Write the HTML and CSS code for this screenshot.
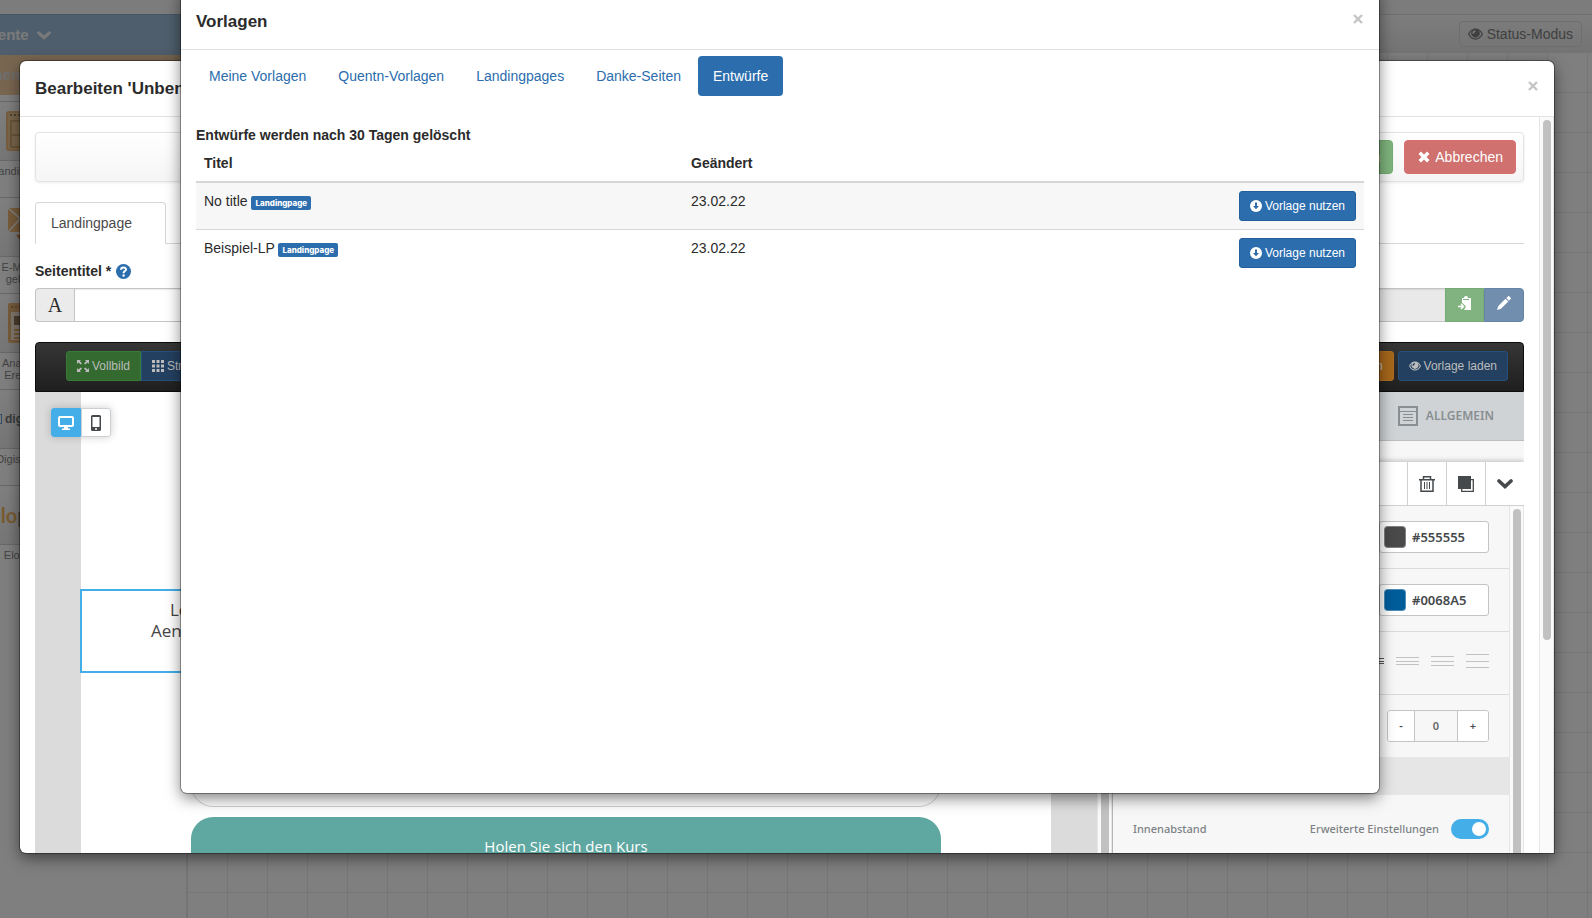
FILE: index.html
```html
<!DOCTYPE html>
<html lang="de">
<head>
    <meta charset="UTF-8">
    <meta name="viewport" content="width=device-width, initial-scale=1.0">
    <title>Vorlagen</title>
    <link rel="stylesheet" href="styles.css">
</head>
<body>
    <!-- shared icons -->
    <svg class="defs" aria-hidden="true">
        <symbol id="i-eye" viewBox="0 0 16 12"><path fill="currentColor" fill-rule="evenodd" d="M8 0C4.500 0 1.500 2.500 0 6c1.500 3.500 4.500 6 8 6s6.500-2.500 8-6C14.500 2.500 11.500 0 8 0zM1.500 6C2.300 4.300 3.300 3 4.700 2.200a4.500 4.500 0 1 0 6.600 0C12.700 3 13.700 4.300 14.500 6c-1.500 3-3.800 4.800-6.500 4.800S3 9 1.500 6zM7 2.200c1 0 1.300.6 1 1.300-.3.700-1.600.7-1.900 1.900-.2.900-1 .8-1.200.2C4.600 3.900 5.500 2.200 7 2.200z"/></symbol>
        <symbol id="i-x" viewBox="0 0 12 12"><path fill="currentColor" d="M3 0.500 6 3.500 9 0.500 11.500 3 8.500 6 11.500 9 9 11.500 6 8.500 3 11.500 0.500 9 3.500 6 0.500 3z"/></symbol>
        <symbol id="i-close" viewBox="0 0 10 10"><path stroke="currentColor" stroke-width="2.400" d="M1 1l8 8M9 1L1 9"/></symbol>
        <symbol id="i-down" viewBox="0 0 12 12"><circle cx="6" cy="6" r="6" fill="currentColor"/><path fill="#2b6dad" d="M5 2.500h2V6h2L6 9.300 3 6h2z"/></symbol>
        <symbol id="i-chevron" viewBox="0 0 16 10"><path fill="none" stroke="currentColor" stroke-width="3.600" stroke-linecap="round" stroke-linejoin="miter" d="M2 2l6 5.500L14 2"/></symbol>
    </svg>

    <div class="page">
        <div class="topstrip"></div>
        <div class="workspace">
            <aside class="sidebar">
                <div class="group group-blue">Elemente <svg width="14" height="9"><use href="#i-chevron"/></svg></div>
                <div class="group group-orange">Segmente</div>
                <div class="item">
                    <div class="item-icon"><svg width="36" height="40" viewBox="0 0 36 40"><rect x="1" y="1" width="34" height="38" rx="2" fill="#f3cc98" stroke="#eebb7d" stroke-width="2"/><path d="M4 4h28" stroke="#a08460" stroke-width="2" stroke-dasharray="2 2"/><path fill="none" stroke="#d5a771" stroke-width="2" d="M5 10h26v26H5zM5 24h26M16 10v26"/></svg></div>
                    <div class="item-label">Landingpage</div>
                </div>
                <div class="item">
                    <div class="item-icon item-icon-mail"><svg width="32" height="38" viewBox="0 0 32 38"><path fill="#eeb978" d="M0 0h32v24H0z"/><path fill="none" stroke="#fff" stroke-width="1.500" d="M0 0l16 14L32 0M0 24l12-13M32 24L20 11"/><path fill="#d88e4d" d="M8 27l8-1 4 10-3 2z"/></svg></div>
                    <div class="item-label">E-Mail ist<br>geklickt</div>
                </div>
                <div class="item">
                    <div class="item-icon item-icon-mail"><svg width="32" height="40" viewBox="0 0 32 40"><rect width="32" height="40" rx="2" fill="#ecb677"/><path stroke="#b4926b" stroke-width="2" stroke-dasharray="2 2" d="M3 4h26"/><path fill="#fff0dc" d="M3 9h26v28H3z"/><path fill="#987c5d" d="M6 13h10v9H6z"/><path stroke="#eaad68" stroke-width="2" d="M6 27h20M6 31h20M6 35h20"/></svg></div>
                    <div class="item-label">Analytics<br>Ereignis</div>
                </div>
                <div class="item">
                    <div class="item-icon brand-digi"><span class="digi-box"></span><b>digistore</b></div>
                    <div class="item-label">Digistore24</div>
                </div>
                <div class="item">
                    <div class="item-icon brand-elo"><div><span>elo</span>page</div></div>
                    <div class="item-label">Elopage</div>
                </div>
            </aside>
            <main class="board">
                <div class="board-bar">
                    <button class="status-btn" type="button"><svg width="15" height="12"><use href="#i-eye"/></svg> Status-Modus</button>
                </div>
                <div class="board-grid"></div>
            </main>
        </div>
    </div>
    <div class="backdrop"></div>

    <!-- edit dialog -->
    <section class="modal modal-edit" aria-label="Bearbeiten">
        <header class="modal-header">
            <h2>Bearbeiten 'Unbenannt'</h2>
            <button class="close" type="button" aria-label="Schließen"><svg width="10" height="10"><use href="#i-close"/></svg></button>
        </header>
        <div class="modal-scroll">
            <div class="edit-body">
                <div class="actions">
                    <button class="btn btn-save" type="button">Speichern</button>
                    <button class="btn btn-cancel" type="button"><svg width="12" height="12"><use href="#i-x"/></svg> Abbrechen</button>
                </div>
                <div class="tabs"><a class="tab" href="#landingpage">Landingpage</a></div>
                <label class="field-label" for="pagetitle">Seitentitel *
                    <svg width="15" height="15" viewBox="0 0 15 15"><circle cx="7.500" cy="7.500" r="7.500" fill="#2b6dad"/><path fill="none" stroke="#fff" stroke-width="2" d="M5 5.800C5 2.700 10.200 2.800 10 5.500 9.900 7.200 7.600 7 7.600 9.200"/><circle cx="7.600" cy="11.500" r="1.200" fill="#fff"/></svg>
                </label>
                <div class="inputs">
                    <span class="addon">A</span>
                    <input class="input" id="pagetitle" type="text">
                    <input class="input input-readonly" type="text" aria-label="Adresse" readonly>
                    <button class="icon-btn icon-green" type="button" aria-label="Kopieren"><svg width="14" height="14" viewBox="0 0 14 14"><path fill="#fff" d="M4 2h2a2 2 0 0 1 4 0h3v12H6l2-3.500L4.500 7 4 7.500z"/><path stroke="#80b37f" d="M5 3.500h6"/><path fill="none" stroke="#fff" stroke-width="1.500" d="M0 10.500h5M3 8l2.500 2.500L3 13"/></svg></button>
                    <button class="icon-btn icon-blue" type="button" aria-label="Bearbeiten"><svg width="14" height="14" viewBox="0 0 14 14"><path fill="#fff" d="M0 14l1.300-4L8.500 2.700l2.800 2.800L4 12.700zM9.300 2L11 .4c.5-.5 1-.5 1.400 0L13.700 1.700c.4.4.4.900 0 1.300L12 4.700z"/></svg></button>
                </div>
                <div class="navbar">
                    <div class="nav-group">
                        <button class="nav-btn nav-green" type="button"><svg width="12" height="12" viewBox="0 0 12 12"><path fill="currentColor" d="M0 0h4L2.800 1.200 5 3.400 3.800 4.600 1.400 2.500 0 4zM12 0v4l-1.400-1.500-2.400 2.100L7 3.400l2.200-2.200L8 0zM0 12V8l1.400 1.500 2.400-2.100L5 8.600l-2.200 2.200L4 12zM12 12H8l1.200-1.200L7 8.600l1.200-1.200 2.400 2.100L12 8z"/></svg> Vollbild</button>
                        <button class="nav-btn nav-blue" type="button"><svg width="12" height="12" viewBox="0 0 12 12"><path stroke="currentColor" stroke-width="3" stroke-dasharray="3 1.500" d="M0 1.500h12M0 6h12M0 10.500h12"/></svg> Struktur</button>
                    </div>
                    <div class="nav-right">
                        <button class="nav-btn nav-orange" type="button">Speichern</button>
                        <button class="nav-btn nav-blue" type="button"><svg width="12" height="10"><use href="#i-eye"/></svg> Vorlage laden</button>
                    </div>
                </div>
                <div class="editor">
                    <div class="canvas">
                        <div class="devices">
                            <button class="device active" type="button" aria-label="Desktop"><svg width="16" height="14" viewBox="0 0 16 14"><rect x="1" y="1" width="14" height="9" rx="1" fill="none" stroke="currentColor" stroke-width="2"/><path fill="currentColor" d="M6 11h4v1.500h2V14H4v-1.500h2z"/></svg></button>
                            <button class="device" type="button" aria-label="Smartphone"><svg width="10" height="16" viewBox="0 0 10 16"><path fill="currentColor" fill-rule="evenodd" d="M1.500 0h7A1.500 1.500 0 0 1 10 1.500v13A1.500 1.500 0 0 1 8.500 16h-7A1.500 1.500 0 0 1 0 14.500v-13A1.500 1.500 0 0 1 1.500 0zm0 2v10h7V2zM4 13.300v1.400h2v-1.400z"/></svg></button>
                        </div>
                        <div class="sheet">
                            <div class="selected">
                                <p class="line">Lorem ipsum dolor sit amet, consectetuer adipiscing elit.</p>
                                <p class="line line-wide">Aenean commodo ligula eget dolor. Aenean massa.</p>
                            </div>
                            <div class="card"></div>
                            <button class="cta" type="button">Holen Sie sich den Kurs</button>
                        </div>
                    </div>
                    <div class="track track-canvas"><span class="thumb"></span></div>
                    <div class="panel">
                        <div class="panel-tabs">
                            <svg width="20" height="20" viewBox="0 0 20 20"><path fill="none" stroke="currentColor" stroke-width="2" d="M1 1h18v18H1z"/><path stroke="currentColor" d="M1 5.500h18M5 8.500h10M5 11.500h10M5 14.500h10"/></svg>
                            ALLGEMEIN
                        </div>
                        <div class="panel-gap"></div>
                        <div class="tools">
                            <button type="button" aria-label="Löschen"><svg width="16" height="16" viewBox="0 0 16 16"><path fill="none" stroke="currentColor" stroke-width="1.500" d="M0 3.700h16M4.500 3.500V.8h7v2.700M2 4v11.200h12V4"/><path stroke="currentColor" d="M5.500 6v7M8 6v7M10.500 6v7"/></svg></button>
                            <button type="button" aria-label="Duplizieren"><svg width="16" height="16" viewBox="0 0 16 16"><path fill="currentColor" d="M0 0h13v13H0z"/><path fill="none" stroke="currentColor" stroke-width="1.300" d="M13 3.700h2.300v11.600H3.700V13"/></svg></button>
                            <button type="button" aria-label="Zuklappen"><svg width="16" height="10"><use href="#i-chevron"/></svg></button>
                        </div>
                        <div class="panel-scroll">
                            <div class="settings">
                                <div class="row"><div class="color"><span class="swatch swatch-gray"></span><input type="text" value="#555555" aria-label="Textfarbe"></div></div>
                                <div class="row"><div class="color"><span class="swatch swatch-blue"></span><input type="text" value="#0068A5" aria-label="Linkfarbe"></div></div>
                                <div class="row spacing">
                                    <svg class="dark" width="23" height="14" viewBox="0 0 23 14"><path stroke="currentColor" d="M0 4.500h23M0 7.500h23M0 9.500h23"/></svg>
                                    <svg width="23" height="14" viewBox="0 0 23 14"><path stroke="currentColor" d="M0 3.500h23M0 7.500h23M0 10.500h23"/></svg>
                                    <svg width="23" height="14" viewBox="0 0 23 14"><path stroke="currentColor" d="M0 2.500h23M0 7.500h23M0 11.500h23"/></svg>
                                    <svg width="23" height="14" viewBox="0 0 23 14"><path stroke="currentColor" d="M0 .5h23M0 7.500h23M0 13.500h23"/></svg>
                                </div>
                                <div class="row"><div class="stepper"><button type="button">-</button><input type="text" value="0" aria-label="Wert"><button type="button">+</button></div></div>
                                <div class="band"></div>
                                <div class="padding-row">
                                    <span>Innenabstand</span>
                                    <label class="switch">Erweiterte Einstellungen <input type="checkbox" checked></label>
                                </div>
                            </div>
                            <div class="track"><span class="thumb"></span></div>
                        </div>
                    </div>
                </div>
            </div>
            <div class="track track-modal"><span class="thumb"></span></div>
        </div>
    </section>

    <!-- template dialog -->
    <section class="modal modal-templates" aria-label="Vorlagen">
        <header class="modal-header">
            <h2>Vorlagen</h2>
            <button class="close" type="button" aria-label="Schließen"><svg width="10" height="10"><use href="#i-close"/></svg></button>
        </header>
        <nav class="pills">
            <a href="#meine">Meine Vorlagen</a>
            <a href="#quentn">Quentn-Vorlagen</a>
            <a href="#landingpages">Landingpages</a>
            <a href="#danke">Danke-Seiten</a>
            <a class="active" href="#entwuerfe">Entwürfe</a>
        </nav>
        <div class="drafts">
            <strong>Entwürfe werden nach 30 Tagen gelöscht</strong>
            <table>
                <thead>
                    <tr><th class="col-title">Titel</th><th>Geändert</th><th></th></tr>
                </thead>
                <tbody>
                    <tr>
                        <td>No title <span class="badge">Landingpage</span></td>
                        <td>23.02.22</td>
                        <td class="use"><button class="btn-use" type="button"><svg width="12" height="12"><use href="#i-down"/></svg> Vorlage nutzen</button></td>
                    </tr>
                    <tr>
                        <td>Beispiel-LP <span class="badge">Landingpage</span></td>
                        <td>23.02.22</td>
                        <td class="use"><button class="btn-use" type="button"><svg width="12" height="12"><use href="#i-down"/></svg> Vorlage nutzen</button></td>
                    </tr>
                </tbody>
            </table>
        </div>
    </section>
</body>
</html>
```
FILE: styles.css
```css
* {
    box-sizing: border-box;
}
body {
    margin: 0;
    height: 100vh;
    overflow: hidden;
    position: relative;
    font-family: "Liberation Sans", Arial, sans-serif;
    font-size: 14px;
    line-height: 20px;
    color: #2b2b2b;
}
button, input {
    font: inherit;
    color: inherit;
    margin: 0;
}
button {
    cursor: pointer;
}
a {
    text-decoration: none;
}
.defs {
    position: absolute;
    width: 0;
    height: 0;
}

/* page behind the dialogs */
.page {
    height: 100%;
    display: flex;
    flex-direction: column;
}
.topstrip {
    height: 14px;
    flex: none;
    background: #f8f8f8;
}
.workspace {
    flex: 1;
    display: flex;
}
.sidebar {
    width: 248px;
    margin-left: -60px;
    border-right: 2px solid #e8e8e8;
    font-size: 11px;
    line-height: 12px;
    color: #888;
}
.group {
    height: 40px;
    padding-left: 22px;
    display: flex;
    align-items: center;
    gap: 8px;
    font-size: 15px;
    font-weight: bold;
    color: #f4f4f4;
}
.group-blue {
    height: 41px;
    background: #9dbcd8;
    border-top: 1px solid #8facc6;
}
.group-orange {
    background: #f2cda3;
    margin-bottom: 6px;
    color: #ddd;
}
.item-icon {
    height: 60px;
    padding-left: 66px;
    display: flex;
    align-items: center;
    border-top: 1px solid #d0d0d0;
    border-bottom: 1px solid #d0d0d0;
    background: linear-gradient(#fff, #ececec);
}
.item-icon-mail {
    padding-left: 68px;
}
.item-label {
    width: 96px;
    height: 36px;
    margin-left: 36px;
    padding-top: 4px;
    text-align: center;
}
.brand-digi {
    padding-left: 52px;
    gap: 3px;
    font-size: 12px;
    color: #777;
}
.digi-box {
    width: 10px;
    height: 10px;
    border: 1px solid #6a9cc8;
}
.brand-elo {
    padding-left: 50px;
    font-family: Lato, sans-serif;
    font-size: 20px;
    font-weight: bold;
}
.brand-elo span {
    color: #f0b860;
}
.board {
    flex: 1;
    display: flex;
    flex-direction: column;
}
.board-bar {
    height: 39px;
    display: flex;
    justify-content: flex-end;
    align-items: center;
    padding-right: 10px;
    background: linear-gradient(#fafafa, #e8e8e8);
    border-top: 1px solid #e0e0e0;
}
.status-btn {
    height: 26px;
    padding: 0 8px;
    display: flex;
    align-items: center;
    gap: 4px;
    background: transparent;
    border: 1px solid #ddd;
    border-radius: 4px;
    color: #808080;
}
.board-grid {
    flex: 1;
    background-image: linear-gradient(#ececec 1px, transparent 1px), linear-gradient(90deg, #ececec 1px, transparent 1px);
    background-size: 40px 40px;
    background-position: 0 39px, 39px 0;
}
.backdrop {
    position: absolute;
    inset: 0;
    background: rgba(0, 0, 0, 0.5);
}

/* dialogs */
.modal {
    position: absolute;
    display: flex;
    flex-direction: column;
    overflow: hidden;
    background: #fff;
    border-radius: 6px;
    box-shadow: 0 0 0 1px rgba(0, 0, 0, 0.35), 0 5px 15px rgba(0, 0, 0, 0.5);
}
.modal-edit {
    inset: 61px 38px 65px 20px;
    border-bottom-right-radius: 0;
}
.modal-templates {
    inset: -12px 213px 125px 181px;
}
.modal-header {
    flex: none;
    display: flex;
    justify-content: space-between;
    padding: 18px 14px 17px 15px;
    border-bottom: 1px solid #e2e2e2;
}
.modal-templates .modal-header {
    padding-top: 24px;
}
.modal-header h2 {
    margin: 0;
    font-size: 17px;
    line-height: 20px;
}
.close {
    border: 0;
    padding: 0 2px 6px;
    background: none;
    color: #c4c4c4;
    line-height: 10px;
}
.modal-scroll {
    flex: 1;
    min-height: 0;
    display: flex;
}
.edit-body {
    flex: 1;
    min-width: 0;
    display: flex;
    flex-direction: column;
    padding: 15px 15px 0;
}
.track {
    width: 15px;
    flex: none;
    padding: 3px 3px 0;
    background: #fafafa;
    border-left: 1px solid #e6e6e6;
    border-right: 1px solid #e6e6e6;
}
.thumb {
    display: block;
    width: 8px;
    height: 100%;
    background: #c1c1c1;
    border-radius: 4px 4px 0 0;
}
.track-modal .thumb {
    height: 71%;
    border-radius: 4px;
}

.actions {
    height: 50px;
    flex: none;
    display: flex;
    justify-content: flex-end;
    align-items: center;
    gap: 11px;
    padding-right: 7px;
    border: 1px solid #e3e3e3;
    border-radius: 4px;
    background: linear-gradient(#fff, #f5f5f5);
    box-shadow: 0 1px 3px rgba(0, 0, 0, 0.08);
}
.btn {
    height: 34px;
    padding: 0 12px 0 13px;
    display: flex;
    align-items: center;
    gap: 5px;
    border: 1px solid;
    border-radius: 4px;
    color: #fff;
}
.btn-save {
    background: #7fb57d;
    border-color: #72ad70;
}
.btn-cancel {
    background: #d0716f;
    border-color: #d9706e;
}
.tabs {
    display: flex;
    flex: none;
    margin-top: 20px;
    border-bottom: 1px solid #d6d6d6;
}
.tab {
    width: 131px;
    height: 42px;
    margin-bottom: -1px;
    padding: 10px 15px;
    border: 1px solid #d6d6d6;
    border-bottom-color: #fff;
    border-radius: 4px 4px 0 0;
    background: #fff;
    color: #4a4a4a;
}
.field-label {
    display: flex;
    align-items: center;
    gap: 5px;
    margin-top: 17px;
    margin-bottom: 7px;
    font-weight: bold;
}
.inputs {
    display: flex;
    flex: none;
    height: 34px;
}
.addon {
    width: 39px;
    border: 1px solid #c4c4c4;
    border-right: 0;
    border-radius: 4px 0 0 4px;
    background: #ebebeb;
    font-family: "Liberation Serif", serif;
    font-size: 20px;
    line-height: 32px;
    text-align: center;
}
.input {
    flex: 1;
    min-width: 0;
    border: 1px solid #c4c4c4;
    padding: 0 12px;
    box-shadow: inset 0 1px 1px rgba(0, 0, 0, 0.08);
}
.input-readonly {
    background: #e9e9e9;
    border-right: 0;
}
.icon-btn {
    width: 39px;
    border: 1px solid;
    padding: 0;
}
.icon-green {
    background: #80b37f;
    border-color: #74ac73;
}
.icon-blue {
    width: 40px;
    background: #718eae;
    border-color: #6485a9;
    border-radius: 0 4px 4px 0;
}
.navbar {
    height: 50px;
    flex: none;
    display: flex;
    justify-content: space-between;
    align-items: center;
    margin-top: 20px;
    padding: 0 15px 2px 30px;
    border: 1px solid #0c0c0c;
    border-radius: 4px 4px 0 0;
    background: linear-gradient(#363636, #1f1f1f);
}
.nav-group, .nav-right {
    display: flex;
}
.nav-right {
    gap: 4px;
}
.nav-btn {
    height: 30px;
    padding: 0 10px;
    display: flex;
    align-items: center;
    gap: 3px;
    border: 1px solid;
    border-radius: 3px;
    font-size: 12px;
    color: #bcbcbc;
}
.nav-group .nav-btn:first-child {
    border-radius: 3px 0 0 3px;
}
.nav-group .nav-btn:last-child {
    border-radius: 0 3px 3px 0;
}
.nav-green {
    background: #34692f;
    border-color: #377b37;
}
.nav-blue {
    background: #234060;
    border-color: #24507c;
}
.nav-orange {
    background: #a5661b;
    border-color: #ad6d1f;
}

.editor {
    flex: 1;
    min-height: 0;
    display: flex;
}
.canvas {
    position: relative;
    flex: 1;
    min-width: 0;
    overflow: hidden;
    padding: 0 46px;
    background: #dbdbdb;
}
.devices {
    position: absolute;
    z-index: 1;
    top: 16px;
    left: 16px;
    display: flex;
    border-radius: 3px;
    box-shadow: 0 0 8px rgba(0, 0, 0, 0.2);
}
.device {
    width: 30px;
    height: 29px;
    padding: 0;
    display: flex;
    align-items: center;
    justify-content: center;
    border: 1px solid #ccd0d4;
    border-radius: 0 3px 3px 0;
    background: #fff;
    color: #45494c;
}
.device.active {
    border-color: #43aee8;
    border-radius: 3px 0 0 3px;
    background: #43aee8;
    color: #fff;
}
.sheet {
    height: 100%;
    padding-top: 197px;
    background: #fff;
    font-family: "Open Sans", sans-serif;
    font-weight: 500;
}
.selected {
    height: 84px;
    margin: 0 -1px;
    padding-top: 8px;
    border: 2px solid #43aee8;
}
.line {
    max-width: 792px;
    margin: 0 auto;
    font-size: 17px;
    line-height: 21px;
    font-weight: normal;
    color: #444;
}
.line-wide {
    max-width: 830px;
}
.card {
    max-width: 750px;
    height: 100px;
    margin: 34px auto 10px;
    border: 1px solid #d0d0d0;
    border-radius: 22px;
}
.cta {
    display: block;
    width: 100%;
    max-width: 750px;
    height: 58px;
    margin: 0 auto;
    border: 0;
    border-radius: 22px;
    background: #5fa8a1;
    color: #fff;
    font-size: 15px;
}
.track-canvas {
    padding-top: 0;
}

/* settings panel */
.panel {
    width: 412px;
    flex: none;
    display: flex;
    flex-direction: column;
    border-left: 1px solid #b5b5b5;
    background: #f7f7f7;
    font-family: "Noto Sans", sans-serif;
    color: #45494c;
}
.panel-tabs {
    height: 49px;
    flex: none;
    display: flex;
    align-items: center;
    justify-content: flex-end;
    gap: 8px;
    padding-right: 30px;
    background: #cfd3d6;
    border-bottom: 1px solid #bcbfc1;
    font-size: 12px;
    font-weight: 600;
    color: #888e91;
}
.panel-gap {
    height: 21px;
    flex: none;
}
.tools {
    height: 44px;
    flex: none;
    display: flex;
    justify-content: flex-end;
    background: #fff;
    border-bottom: 1px solid #ced1d4;
    box-shadow: 0 -2px 4px rgba(0, 0, 0, 0.18);
    clip-path: inset(-6px 0 0 0);
}
.tools button {
    width: 39px;
    padding: 0;
    display: flex;
    align-items: center;
    justify-content: center;
    border: 0;
    border-left: 1px solid #ced1d4;
    background: #fff;
}
.panel-scroll {
    flex: 1;
    min-height: 0;
    display: flex;
}
.settings {
    flex: 1;
    overflow: hidden;
}
.row {
    height: 63px;
    display: flex;
    align-items: center;
    justify-content: flex-end;
    padding-right: 20px;
    border-bottom: 1px solid #d9dcdf;
}
.row:nth-child(4) {
    height: 62px;
    border-bottom: 0;
}
.color {
    width: 110px;
    height: 32px;
    display: flex;
    align-items: center;
    gap: 6px;
    padding: 0 4px;
    border: 1px solid #c4c4c4;
    border-radius: 3px;
    background: #fff;
}
.color input {
    width: 72px;
    border: 0;
    padding: 0;
    background: none;
    font-size: 13px;
    font-weight: 600;
}
.swatch {
    width: 22px;
    height: 22px;
    flex: none;
    border: 1px solid rgba(255, 255, 255, 0.3);
    border-radius: 4px;
}
.swatch-gray {
    background: #4a4a4a;
}
.swatch-blue {
    background: #005c99;
}
.spacing {
    gap: 12px;
    padding-bottom: 4px;
    color: #c0c2c4;
}
.spacing .dark {
    color: #555;
}
.stepper {
    display: flex;
    width: 102px;
    height: 32px;
    overflow: hidden;
    border: 1px solid #c4c4c4;
    border-radius: 3px;
    font-size: 11px;
    font-weight: 600;
}
.stepper button {
    width: 26px;
    padding: 0;
    border: 0;
    background: #fff;
}
.stepper button:last-child {
    width: 30px;
}
.stepper input {
    flex: 1;
    min-width: 0;
    padding: 0;
    border: 0;
    border-left: 1px solid #c4c4c4;
    border-right: 1px solid #c4c4c4;
    background: #f7f7f7;
    text-align: center;
    color: #666;
}
.band {
    height: 38px;
    background: #e6e6e6;
}
.padding-row {
    display: flex;
    justify-content: space-between;
    align-items: center;
    padding: 24px 20px;
    font-size: 11px;
    font-weight: 500;
    color: #7c8285;
}
.switch {
    display: flex;
    align-items: center;
    gap: 12px;
}
.switch input {
    appearance: none;
    width: 38px;
    height: 20px;
    display: flex;
    justify-content: flex-end;
    padding: 3px;
    border-radius: 10px;
    background: #43aee8;
}
.switch input::after {
    content: "";
    width: 14px;
    height: 14px;
    border-radius: 50%;
    background: #fff;
}

/* templates */
.pills {
    display: flex;
    gap: 2px;
    padding: 6px 13px 0;
}
.pills a {
    padding: 10px 15px;
    border-radius: 4px;
    color: #2b6dad;
}
.pills a.active {
    background: #2b6dad;
    color: #fff;
}
.drafts {
    padding: 29px 15px 0;
}
table {
    width: 100%;
    border-collapse: collapse;
}
th, td {
    padding: 8px;
    text-align: left;
    vertical-align: top;
}
th {
    border-bottom: 2px solid #d6d6d6;
}
td {
    border-top: 1px solid #d6d6d6;
}
.col-title {
    width: 487px;
}
tbody tr:first-child {
    background: #f7f7f7;
}
.use {
    text-align: right;
}
.badge {
    display: inline-block;
    padding: 0 4px;
    border-radius: 2px;
    background: #2b6dad;
    color: #fff;
    font-family: Inter, sans-serif;
    font-size: 8px;
    font-weight: 800;
    line-height: 14px;
}
.btn-use {
    height: 30px;
    padding: 0 10px;
    display: inline-flex;
    align-items: center;
    gap: 3px;
    border: 1px solid #235f9c;
    border-radius: 3px;
    background: #2b6dad;
    color: #fff;
    font-size: 12px;
    vertical-align: top;
}
```
